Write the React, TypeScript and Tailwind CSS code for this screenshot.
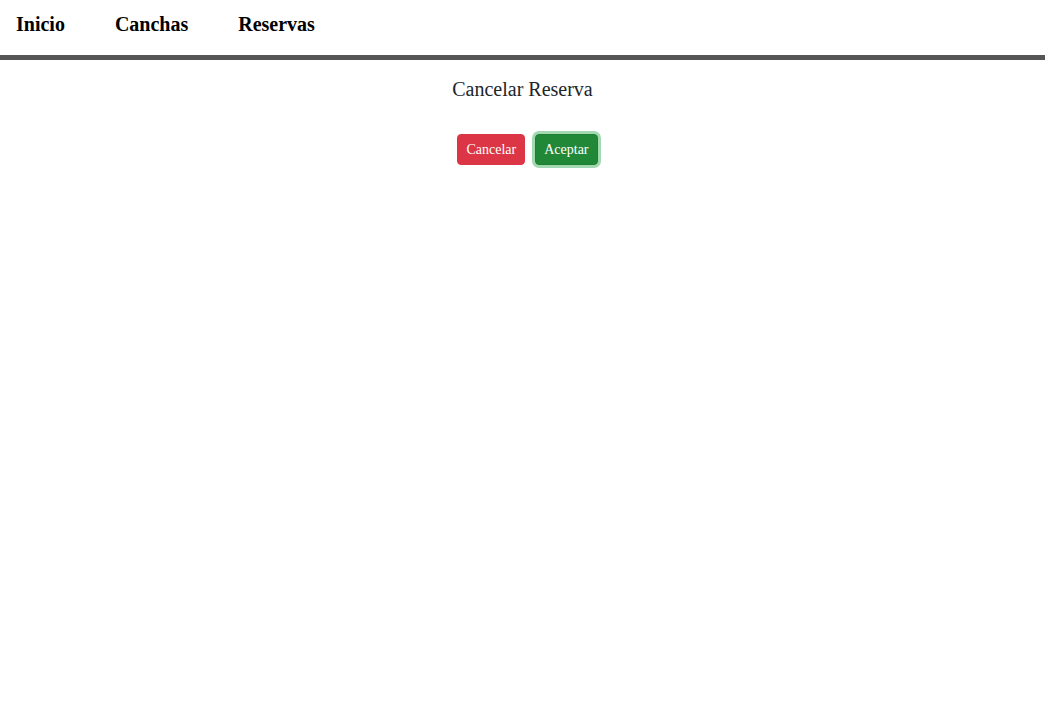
export default function App() {
  const links = ["Inicio", "Canchas", "Reservas"];

  return (
    <div className="min-h-screen bg-white font-['Liberation_Serif',serif] text-[#212529]">
      <nav className="flex h-[60px] gap-[50px] px-4 pt-3 border-b-[5px] border-[#555555]">
        {links.map((link) => (
          <a key={link} href="#" className="text-[20px] leading-6 font-bold text-black">
            {link}
          </a>
        ))}
      </nav>

      <div className="flex flex-col items-center">
        <h2 className="mt-[15px] text-[20px] leading-7">Cancelar Reserva</h2>

        <div className="mt-[31px] flex gap-[10px] pl-[10px]">
          <button className="rounded-[4px] border border-[#dc3545] bg-[#dc3545] px-2 py-1 text-[14px] leading-[21px] text-white">
            Cancelar
          </button>
          <button className="rounded-[4px] border border-[#1e7e34] bg-[#218838] px-2 py-1 text-[14px] leading-[21px] text-white shadow-[0_0_0_3px_rgba(72,180,97,0.5)]">
            Aceptar
          </button>
        </div>
      </div>
    </div>
  );
}
